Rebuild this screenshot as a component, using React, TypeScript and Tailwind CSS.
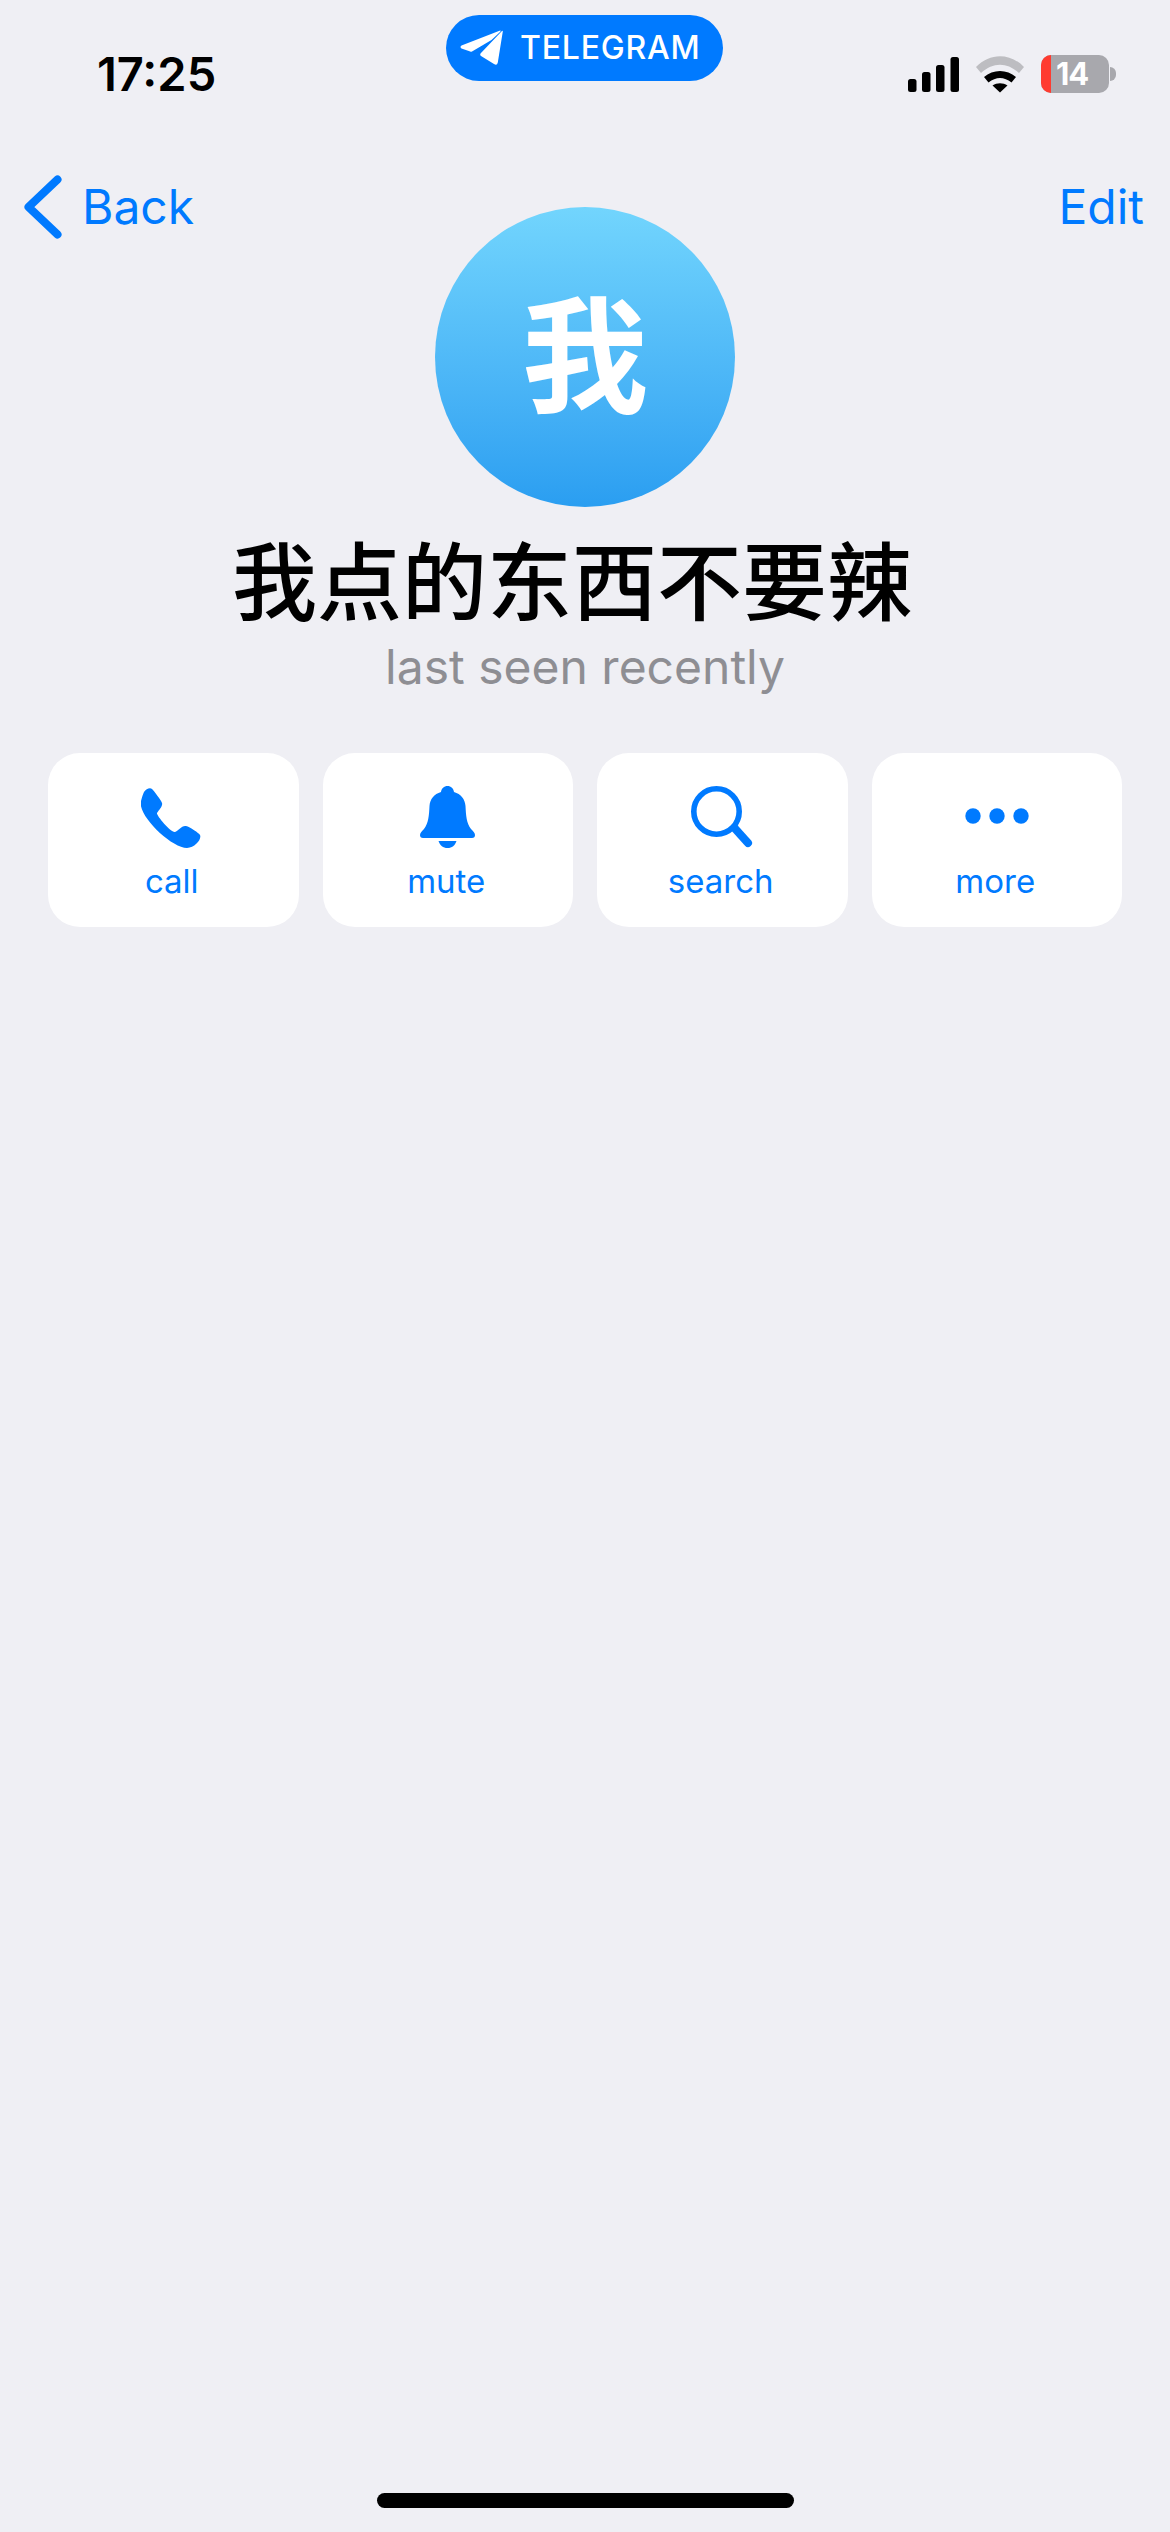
const blue = "#007aff";

function PlaneIcon() {
  return (
    <svg width="43" height="36" viewBox="0 0 43 36" fill="white">
      <path d="M1.5 15.5 L39.5 .8 Q41.5 0 40 2 L31.5 10 L12 21.5 Q10.5 22 9.5 21.3 L1.5 18.5 Q-.5 17 1.5 15.5Z" />
      <path d="M42.8 1.5 L37.8 32.5 Q37 36 34 34 L21 26 Q19.5 25 20.5 23.5 L41 2 Q43 0 42.8 1.5Z" />
    </svg>
  );
}

function SignalIcon() {
  return (
    <svg width="51" height="35" viewBox="0 0 51 35" fill="black">
      <rect x="0" y="22" width="8.5" height="13" rx="2.5" />
      <rect x="14" y="15" width="8.5" height="20" rx="2.5" />
      <rect x="28" y="8" width="8.5" height="27" rx="2.5" />
      <rect x="42.5" y="0" width="8.5" height="35" rx="2.5" />
    </svg>
  );
}

function WifiIcon() {
  return (
    <svg width="48" height="37" viewBox="0 0 48 37">
      <path fill="#bdbdc1" d="M0 11 C14 -3.5 34 -3.5 48 11 L43 17 C31 6 17 6 5 17Z" />
      <path fill="black" d="M8 21 C17 13 31 13 40 21 L35.5 26.5 C28 20.5 20 20.5 12.5 26.5Z" />
      <path fill="black" d="M16.5 29.5 C21 26.5 27 26.5 31.5 29.5 L24 36.5Z" />
    </svg>
  );
}

function PhoneIcon() {
  return (
    <svg className="-ml-[4px]" width="60" height="61" viewBox="0 0 60 61" fill={blue}>
      <path d="M3 5 C5 2 9 0 11 2 C13 4 20 13 21 16 C22 19 18 23 16 26 C15 28 30 46 34 45 C37 44 41 38 45 39 C49 40 58 46 59 48 C61 52 54 61 46 61 C30 61 -4 28 0 14 C1 10 2 7 3 5Z" />
    </svg>
  );
}

function BellIcon() {
  return (
    <svg width="55" height="62" viewBox="0 0 55 62" fill={blue}>
      <path d="M27.5 0 C31 0 33.5 2.5 34 6 C41 8 45 13 45.5 20 C46 30 46.5 37 51 43 C53 45 55 47 55 49 C55 51 54 52 52 52 H3 C1 52 0 51 0 49 C0 47 2 45 4 43 C8.5 37 9 30 9.5 20 C10 13 14 8 21 6 C21.5 2.5 24 0 27.5 0Z" />
      <path d="M18.5 55 H36.5 C35 59.5 32 62 27.5 62 C23 62 20 59.5 18.5 55Z" />
    </svg>
  );
}

function SearchIcon() {
  return (
    <svg width="62" height="62" viewBox="0 0 62 62" fill="none" stroke={blue} strokeLinecap="round">
      <circle cx="25.5" cy="25.5" r="22.7" strokeWidth="5.6" />
      <path d="M43.5 42 L57 57" strokeWidth="8" />
    </svg>
  );
}

function DotsIcon() {
  return (
    <svg width="64" height="62" viewBox="0 0 64 62" fill={blue}>
      <circle cx="8" cy="30" r="7.7" />
      <circle cx="32" cy="30" r="7.7" />
      <circle cx="56" cy="30" r="7.7" />
    </svg>
  );
}

const actions = [
  { label: "call", icon: <PhoneIcon /> },
  { label: "mute", icon: <BellIcon /> },
  { label: "search", icon: <SearchIcon /> },
  { label: "more", icon: <DotsIcon /> },
];

export default function App() {
  return (
    <div className="flex h-[2532px] w-[1170px] flex-col bg-[#efeff4] font-['Inter','Noto_Sans_CJK_SC',sans-serif]">
      {/* Status bar */}
      <div className="flex h-[175px] items-start">
        <div className="w-[446px] pl-[97px] pt-[46px] text-[47px] font-semibold leading-[56px] text-black">17:25</div>
        <div className="mt-[15px] flex h-[66px] w-[277px] items-center gap-[17px] rounded-full bg-[#007aff] pl-[14px]">
          <PlaneIcon />
          <span className="text-[32px] font-medium leading-[40px] tracking-[0.8px] text-white">TELEGRAM</span>
        </div>
        <div className="ml-[185px] mt-[55px] flex items-center">
          <SignalIcon />
          <div className="ml-[17px]">
            <WifiIcon />
          </div>
          <div className="ml-[17px] flex h-[38px] w-[68px] overflow-hidden rounded-[10px] bg-[#a8a8ad]">
            <div className="w-[10px] bg-[#ff3b30]" />
            <span className="ml-[5px] text-[31px] font-bold leading-[38px] tracking-[-1px] text-white">14</span>
          </div>
          <div className="ml-[1px] h-[14px] w-[6px] rounded-r-full bg-[#a8a8ad]" />
        </div>
      </div>

      {/* Nav */}
      <div className="flex h-[64px] items-start justify-between pl-[24px] pr-[26px]">
        <div className="flex items-center">
          <svg width="38" height="64" viewBox="0 0 38 64" fill="none" stroke={blue} strokeWidth="8" strokeLinecap="round" strokeLinejoin="round">
            <path d="M33.5 4.5 L4.5 32 L33.5 59.5" />
          </svg>
          <span className="ml-[20px] text-[48px] leading-[64px] text-[#007aff]">Back</span>
        </div>
        <span className="text-[48px] leading-[64px] text-[#007aff]">Edit</span>
      </div>

      {/* Profile */}
      <div className="-mt-[32px] flex flex-col items-center">
        <div className="flex h-[300px] w-[300px] items-center justify-center rounded-full bg-gradient-to-b from-[#72d5fd] to-[#2a9ef1] text-[126px] font-semibold text-white">
          我
        </div>
        <div className="mr-[26px] mt-[27px] text-[85px] font-medium leading-[100px] text-black">我点的东西不要辣</div>
        <div className="mt-[1px] text-[48px] leading-[64px] text-[#8e8e93]">last seen recently</div>
      </div>

      {/* Actions */}
      <div className="mt-[54px] grid grid-cols-4 gap-[24px] px-[48px]">
        {actions.map((a) => (
          <div key={a.label} className="flex h-[174px] flex-col items-center rounded-[32px] bg-white pt-[33px]">
            <div className="flex h-[62px] items-center justify-center">{a.icon}</div>
            <span className="-ml-[3px] mt-[13px] text-[33px] leading-[40px] text-[#007aff]">{a.label}</span>
          </div>
        ))}
      </div>

      {/* Home indicator */}
      <div className="mt-auto flex justify-center pb-[24px]">
        <div className="h-[15px] w-[417px] rounded-full bg-black" />
      </div>
    </div>
  );
}
